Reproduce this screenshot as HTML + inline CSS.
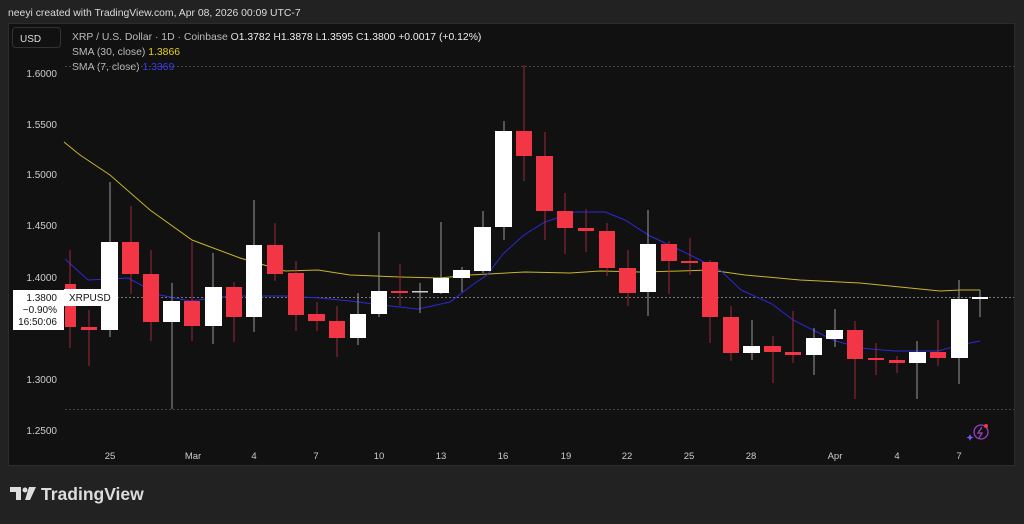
<!DOCTYPE html>
<html><head><meta charset="utf-8"><style>
body{margin:0;width:1024px;height:519px;background:#222;overflow:hidden;font-family:"Liberation Sans",sans-serif;}
</style></head><body>
<svg width="1024" height="519" xmlns="http://www.w3.org/2000/svg" font-family="Liberation Sans, sans-serif">
<rect width="1024" height="519" fill="#222"/>
<text x="8" y="16" fill="#dcdcdc" font-size="10.4">neeyi created with TradingView.com, Apr 08, 2026 00:09 UTC-7</text>
<rect x="8.5" y="23.5" width="1006" height="442" fill="#111" stroke="#2c2c2c"/>
<rect x="12.5" y="27.5" width="48" height="20" rx="3" fill="#111" stroke="#333"/>
<text x="20" y="42" fill="#ddd" font-size="10">USD</text>
<text x="72" y="40" fill="#bbb" font-size="10.4">XRP / U.S. Dollar · 1D · Coinbase <tspan fill="#ddd">O</tspan><tspan fill="#eee">1.3782</tspan> <tspan fill="#ddd">H</tspan><tspan fill="#eee">1.3878</tspan> <tspan fill="#ddd">L</tspan><tspan fill="#eee">1.3595</tspan> <tspan fill="#ddd">C</tspan><tspan fill="#eee">1.3800</tspan> <tspan fill="#eee">+0.0017 (+0.12%)</tspan></text>
<text x="72" y="55" fill="#bbb" font-size="10.4">SMA (30, close) <tspan fill="#e6d020">1.3866</tspan></text>
<text x="72" y="70" fill="#bbb" font-size="10.4">SMA (7, close) <tspan fill="#3a3aff">1.3369</tspan></text>
<g stroke="#444" stroke-dasharray="2,2" stroke-width="1">
<line x1="65" y1="66.5" x2="1014" y2="66.5"/>
<line x1="65" y1="409.5" x2="1014" y2="409.5"/>
<line x1="65" y1="297.5" x2="1014" y2="297.5" stroke="#777"/>
</g>
<g fill="#ccc" font-size="10" text-anchor="end">
<text x="57" y="77">1.6000</text><text x="57" y="128">1.5500</text><text x="57" y="178">1.5000</text>
<text x="57" y="229">1.4500</text><text x="57" y="281">1.4000</text><text x="57" y="383">1.3000</text><text x="57" y="434">1.2500</text>
</g>
<g fill="#ccc" font-size="9.5" text-anchor="middle">
<text x="110" y="459">25</text><text x="193" y="459">Mar</text><text x="254" y="459">4</text><text x="316" y="459">7</text>
<text x="379" y="459">10</text><text x="441" y="459">13</text><text x="503" y="459">16</text><text x="566" y="459">19</text>
<text x="627" y="459">22</text><text x="689" y="459">25</text><text x="751" y="459">28</text><text x="835" y="459">Apr</text>
<text x="897" y="459">4</text><text x="959" y="459">7</text>
</g>
<polyline fill="none" stroke="#c9b52a" stroke-width="1" points="64,142 80,155 110,175 150,210 192,240 240,258 285,271 318,270 350,275 400,277 440,278 470,275 525,272 570,273 600,271 640,272 680,271 710,270 745,275 800,280 860,283 900,287 940,291 960,290 980,290"/>
<polyline fill="none" stroke="#2a2ad8" stroke-width="1" points="65,259 88,280 128,278 160,295 190,301 230,296 285,296 320,298 350,301 390,306 418,309 450,302 475,283 487,275 503,254 524,235 545,222 575,212 605,212 625,220 650,236 665,243 690,255 720,270 741,290 772,304 793,320 833,340 860,348 895,351 938,351 960,345 980,341"/>
<g>
<line x1="70" y1="250" x2="70" y2="348" stroke="#a0283a"/><rect x="65" y="284" width="11" height="43" fill="#f23645"/>
<line x1="89" y1="310" x2="89" y2="366" stroke="#a0283a"/><rect x="81" y="327" width="16" height="3" fill="#f23645"/>
<line x1="110" y1="182" x2="110" y2="337" stroke="#999"/><rect x="101" y="242" width="17" height="88" fill="#fff"/>
<line x1="131" y1="206" x2="131" y2="294" stroke="#a0283a"/><rect x="122" y="242" width="17" height="32" fill="#f23645"/>
<line x1="151" y1="250" x2="151" y2="341" stroke="#a0283a"/><rect x="143" y="274" width="16" height="48" fill="#f23645"/>
<line x1="172" y1="283" x2="172" y2="409" stroke="#999"/><rect x="163" y="301" width="17" height="21" fill="#fff"/>
<line x1="192" y1="242" x2="192" y2="341" stroke="#a0283a"/><rect x="184" y="301" width="16" height="25" fill="#f23645"/>
<line x1="213" y1="253" x2="213" y2="344" stroke="#999"/><rect x="205" y="287" width="17" height="39" fill="#fff"/>
<line x1="234" y1="282" x2="234" y2="342" stroke="#a0283a"/><rect x="226" y="287" width="16" height="30" fill="#f23645"/>
<line x1="254" y1="200" x2="254" y2="332" stroke="#999"/><rect x="246" y="245" width="16" height="72" fill="#fff"/>
<line x1="275" y1="223" x2="275" y2="281" stroke="#a0283a"/><rect x="267" y="245" width="16" height="29" fill="#f23645"/>
<line x1="296" y1="261" x2="296" y2="331" stroke="#a0283a"/><rect x="288" y="273" width="16" height="42" fill="#f23645"/>
<line x1="317" y1="302" x2="317" y2="331" stroke="#a0283a"/><rect x="308" y="314" width="17" height="7" fill="#f23645"/>
<line x1="337" y1="306" x2="337" y2="357" stroke="#a0283a"/><rect x="329" y="321" width="16" height="17" fill="#f23645"/>
<line x1="358" y1="293" x2="358" y2="345" stroke="#999"/><rect x="350" y="314" width="16" height="24" fill="#fff"/>
<line x1="379" y1="232" x2="379" y2="317" stroke="#999"/><rect x="371" y="291" width="16" height="23" fill="#fff"/>
<line x1="400" y1="264" x2="400" y2="306" stroke="#a0283a"/><rect x="391" y="291" width="17" height="2" fill="#f23645"/>
<line x1="420" y1="283" x2="420" y2="313" stroke="#999"/><rect x="412" y="291" width="16" height="1.5" fill="#ccc"/>
<line x1="441" y1="222" x2="441" y2="294" stroke="#999"/><rect x="433" y="278" width="16" height="15" fill="#fff"/>
<line x1="462" y1="267" x2="462" y2="292" stroke="#999"/><rect x="453" y="270" width="17" height="8" fill="#fff"/>
<line x1="483" y1="211" x2="483" y2="273" stroke="#999"/><rect x="474" y="227" width="17" height="44" fill="#fff"/>
<line x1="504" y1="121" x2="504" y2="240" stroke="#999"/><rect x="495" y="131" width="17" height="96" fill="#fff"/>
<line x1="524" y1="65" x2="524" y2="181" stroke="#a0283a"/><rect x="516" y="131" width="16" height="25" fill="#f23645"/>
<line x1="545" y1="132" x2="545" y2="240" stroke="#a0283a"/><rect x="536" y="156" width="17" height="55" fill="#f23645"/>
<line x1="565" y1="193" x2="565" y2="254" stroke="#a0283a"/><rect x="557" y="211" width="16" height="17" fill="#f23645"/>
<line x1="586" y1="209" x2="586" y2="252" stroke="#a0283a"/><rect x="578" y="228" width="16" height="3" fill="#f23645"/>
<line x1="607" y1="223" x2="607" y2="276" stroke="#a0283a"/><rect x="599" y="231" width="16" height="37" fill="#f23645"/>
<line x1="628" y1="250" x2="628" y2="306" stroke="#a0283a"/><rect x="619" y="268" width="17" height="25" fill="#f23645"/>
<line x1="648" y1="210" x2="648" y2="316" stroke="#999"/><rect x="640" y="244" width="16" height="48" fill="#fff"/>
<line x1="669" y1="241" x2="669" y2="294" stroke="#a0283a"/><rect x="661" y="244" width="16" height="17" fill="#f23645"/>
<line x1="690" y1="238" x2="690" y2="275" stroke="#a0283a"/><rect x="681" y="261" width="17" height="2" fill="#f23645"/>
<line x1="710" y1="260" x2="710" y2="343" stroke="#a0283a"/><rect x="702" y="262" width="16" height="55" fill="#f23645"/>
<line x1="731" y1="306" x2="731" y2="361" stroke="#a0283a"/><rect x="723" y="317" width="16" height="36" fill="#f23645"/>
<line x1="752" y1="320" x2="752" y2="360" stroke="#999"/><rect x="743" y="346" width="17" height="7" fill="#fff"/>
<line x1="773" y1="336" x2="773" y2="383" stroke="#a0283a"/><rect x="764" y="346" width="17" height="6" fill="#f23645"/>
<line x1="793" y1="311" x2="793" y2="363" stroke="#a0283a"/><rect x="785" y="352" width="16" height="3" fill="#f23645"/>
<line x1="814" y1="328" x2="814" y2="375" stroke="#999"/><rect x="806" y="338" width="16" height="17" fill="#fff"/>
<line x1="835" y1="309" x2="835" y2="347" stroke="#999"/><rect x="826" y="330" width="17" height="9" fill="#fff"/>
<line x1="855" y1="321" x2="855" y2="399" stroke="#a0283a"/><rect x="847" y="330" width="16" height="29" fill="#f23645"/>
<line x1="876" y1="343" x2="876" y2="375" stroke="#a0283a"/><rect x="868" y="358" width="16" height="2" fill="#f23645"/>
<line x1="897" y1="356" x2="897" y2="373" stroke="#a0283a"/><rect x="889" y="360" width="16" height="3" fill="#f23645"/>
<line x1="917" y1="341" x2="917" y2="399" stroke="#999"/><rect x="909" y="352" width="17" height="11" fill="#fff"/>
<line x1="938" y1="320" x2="938" y2="366" stroke="#a0283a"/><rect x="930" y="352" width="16" height="6" fill="#f23645"/>
<line x1="959" y1="280" x2="959" y2="384" stroke="#999"/><rect x="951" y="299" width="17" height="59" fill="#fff"/>
<line x1="980" y1="290" x2="980" y2="317" stroke="#999"/><rect x="972" y="297" width="16" height="2" fill="#fff"/>
</g>
<rect x="13" y="290" width="51" height="40" fill="#fff"/>
<rect x="64" y="289" width="51" height="17" fill="#fff"/>
<text x="57" y="301" fill="#111" font-size="10" text-anchor="end">1.3800</text>
<text x="57" y="313" fill="#111" font-size="10" text-anchor="end">−0.90%</text>
<text x="57" y="325" fill="#111" font-size="10" text-anchor="end">16:50:06</text>
<text x="69" y="301" fill="#111" font-size="10">XRPUSD</text>
<g fill="none" stroke="#9c3fc6" stroke-width="1.3">
<circle cx="981" cy="432" r="7"/>
<path d="M982 427 L978 433 L982 433 L979 438"/>
</g>
<circle cx="986" cy="426" r="2" fill="#f23645"/>
<path d="M970 434 l1 2.5 2.5 1 -2.5 1 -1 2.5 -1 -2.5 -2.5 -1 2.5 -1z" fill="#7a5cff"/>
<g fill="#ddd">
<path d="M10 487 h11 v13 h-5 v-8 h-6z"/>
<circle cx="25" cy="490" r="2.5"/>
<path d="M29 487 h7 l-6 13 h-5z"/>
</g>
<text x="41" y="500" fill="#ddd" font-size="17.5" font-weight="bold">TradingView</text>
</svg>
</body></html>
